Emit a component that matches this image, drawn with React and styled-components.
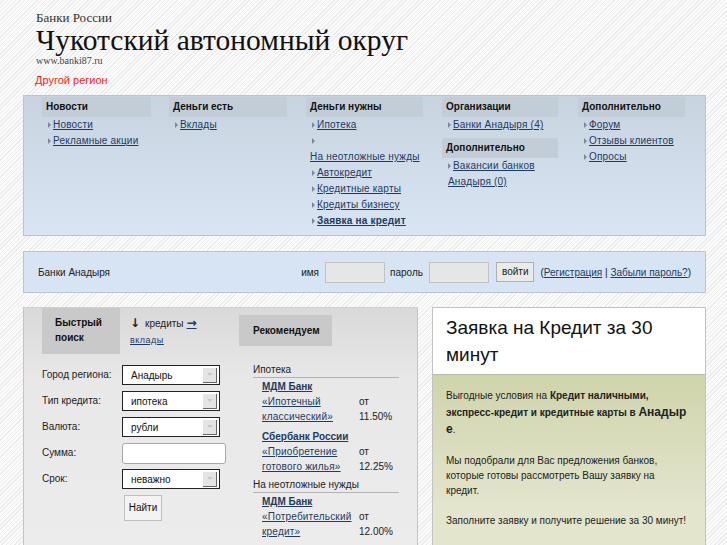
import React from "react";
import styled, { createGlobalStyle } from "styled-components";

const GlobalStyle = createGlobalStyle`
  html, body {
    margin: 0;
    padding: 0;
  }
  body {
    font-family: "Liberation Sans", Arial, sans-serif;
    background: repeating-linear-gradient(
      135deg,
      #fbfbfb 0px,
      #fbfbfb 2px,
      #ebebeb 2px,
      #ebebeb 3px
    );
    min-height: 545px;
    overflow: hidden;
  }
`;

const Page = styled.div`
  width: 683px;
  padding-left: 23px;
`;

const Header = styled.div`
  padding: 10px 0 0 13px;
  height: 95px;
  box-sizing: border-box;
`;

const SiteGroup = styled.div`
  font-family: "Liberation Serif", "Times New Roman", serif;
  font-size: 13px;
  line-height: 15px;
  color: #333;
`;

const SiteTitle = styled.h1`
  margin: 0;
  font-family: "Liberation Serif", "Times New Roman", serif;
  font-weight: normal;
  font-size: 29.5px;
  line-height: 30px;
  color: #111;
`;

const SiteUrl = styled.div`
  font-family: "Liberation Serif", "Times New Roman", serif;
  font-size: 10px;
  line-height: 12px;
  color: #444;
`;

const RegionLink = styled.a`
  display: block;
  margin-top: 7px;
  font-size: 11px;
  color: #ff1a1a;
  text-decoration: none;
  margin-left: -1px;
`;

const Nav = styled.div`
  display: grid;
  grid-template-columns: 127px 137px 136px 136px 1fr;
  padding: 1px 0 6px 18px;
  border: 1px solid #b8c4d0;
  background: linear-gradient(#c8d3e0, #d9e5f2);
`;

const NavColumn = styled.div`
  display: flex;
  flex-direction: column;
`;

const NavHead = styled.div`
  width: ${(p) => p.$w}px;
  height: 20px;
  box-sizing: border-box;
  padding-left: 4px;
  background: #c3cdd8;
  font-size: 10px;
  font-weight: bold;
  line-height: 20px;
  color: #111;
  margin-top: ${(p) => (p.$gap ? "5px" : "0")};
`;

const NavItem = styled.div`
  font-size: 10px;
  line-height: 16px;
  padding-left: 6px;
  color: #1d3b63;
`;

const Bullet = styled.span`
  display: inline-block;
  width: 0;
  height: 0;
  border-top: 3px solid transparent;
  border-bottom: 3px solid transparent;
  border-left: 3px solid #7d8896;
  margin-right: 2px;
  vertical-align: 0px;
`;

const NavLink = styled.a`
  color: #1d3b63;
  text-decoration: underline;
  font-weight: ${(p) => (p.$bold ? "bold" : "normal")};
  letter-spacing: 0.2px;
  display: ${(p) => (p.$break ? "block" : "inline")};
  margin-left: ${(p) => (p.$break ? "-2px" : "0")};
`;

const LoginBar = styled.div`
  margin-top: 15px;
  height: 42px;
  box-sizing: border-box;
  border: 1px solid #b7c6d6;
  background: #d6e4f3;
  display: flex;
  align-items: center;
  padding: 0 14px;
  font-size: 10px;
  color: #222;
`;

const LoginTitle = styled.div`
  flex: 1;
`;

const LoginLabel = styled.span`
  margin-right: 6px;
`;

const LoginInput = styled.div`
  width: 58px;
  height: 19px;
  border: 1px solid #c2c2c2;
  background: #e6e6e6;
  margin-right: 5px;
`;

const LoginButton = styled.div`
  height: 20px;
  box-sizing: border-box;
  padding: 0 5px;
  border: 1px solid #b0b0b0;
  background: #eaeaea;
  line-height: 18px;
  margin-left: 2px;
  margin-right: 6px;
`;

const BlueLink = styled.a`
  color: #1d3b63;
  text-decoration: underline;
`;

const Bottom = styled.div`
  margin-top: 14px;
  display: flex;
  gap: 14px;
  height: 240px;
`;

const SearchPanel = styled.div`
  width: 395px;
  box-sizing: border-box;
  border-left: 1px solid #c4c4c4;
  border-top: 1px solid #d0d0d0;
  border-right: 1px solid #c4c4c4;
  background: linear-gradient(#d9d9d9, #e8e8e8 30%, #ececec);
  display: flex;
  padding-left: 18px;
`;

const SearchColumn = styled.div`
  width: 197px;
`;

const Tabs = styled.div`
  display: flex;
  height: 46px;
`;

const ActiveTab = styled.div`
  width: 78px;
  box-sizing: border-box;
  padding: 7px 0 0 13px;
  background: #c9c9c9;
  font-size: 10px;
  font-weight: bold;
  line-height: 15px;
  color: #111;
`;

const TabSwitch = styled.div`
  margin-left: 10px;
  padding-top: 7px;
  font-size: 10px;
  line-height: 16px;
  color: #222;
`;

const Arrow = styled.span`
  font-family: "DejaVu Sans", sans-serif;
  font-weight: bold;
  font-size: 12px;
  margin-right: 5px;
`;

const TabArrowLink = styled.a`
  font-family: "DejaVu Sans", sans-serif;
  color: #1d3b63;
  text-decoration: underline;
  font-weight: bold;
  font-size: 12px;
  margin-left: 3px;
`;

const SmallLink = styled.a`
  display: block;
  color: #1d3b63;
  text-decoration: underline;
  font-size: 9px;
  letter-spacing: 0.5px;
`;

const Form = styled.div`
  margin-top: 11px;
  display: grid;
  grid-template-columns: 80px 1fr;
  grid-auto-rows: 26px;
  align-items: start;
  font-size: 10px;
  color: #222;
`;

const FieldLabel = styled.div`
  line-height: 19px;
`;

const Select = styled.div`
  width: 98px;
  height: 20px;
  box-sizing: border-box;
  border: 1px solid #222;
  background: #fff;
  display: flex;
  align-items: center;
  justify-content: space-between;
  padding: 0 2px 0 8px;
  font-size: 10px;
  color: #111;
`;

const SelectArrow = styled.span`
  width: 14px;
  height: 15px;
  box-sizing: border-box;
  background: #e4e4e4;
  border-right: 1px solid #666;
  border-bottom: 1px solid #666;
  display: flex;
  align-items: center;
  justify-content: center;
  &::after {
    content: "";
    border-left: 3px solid transparent;
    border-right: 3px solid transparent;
    border-top: 3px solid #c8c8c8;
  }
`;

const TextInput = styled.div`
  width: 104px;
  height: 21px;
  box-sizing: border-box;
  border: 1px solid #a8a8a8;
  border-radius: 3px;
  background: #fff;
`;

const FindButton = styled.div`
  grid-column: 2;
  width: 38px;
  height: 26px;
  box-sizing: border-box;
  margin-left: 2px;
  border: 1px solid #c0c0c0;
  background: #f3f3f3;
  font-size: 10px;
  text-align: center;
  line-height: 24px;
  color: #111;
`;

const RecColumn = styled.div`
  width: 160px;
  padding-top: 7px;
`;

const RecTab = styled.div`
  width: 93px;
  height: 31px;
  box-sizing: border-box;
  padding-left: 14px;
  background: #c9c9c9;
  font-size: 10px;
  font-weight: bold;
  line-height: 31px;
  color: #111;
`;

const RecList = styled.div`
  margin-top: 17px;
  padding-left: 14px;
  width: 146px;
`;

const RecCategory = styled.div`
  font-size: 10px;
  line-height: 14px;
  color: #222;
  border-bottom: 1px solid #b3b3b3;
`;

const RecOffer = styled.div`
  display: grid;
  grid-template-columns: 97px 1fr;
  padding-left: 9px;
  padding-top: 2px;
  margin-bottom: 4px;
  font-size: 10px;
  line-height: 15px;
  color: #222;
`;

const BankName = styled.a`
  grid-column: 1 / 3;
  font-weight: bold;
  color: #1d3b63;
  text-decoration: underline;
  line-height: 14px;
`;

const OfferName = styled.a`
  color: #1d3b63;
  text-decoration: underline;
  letter-spacing: 0.2px;
`;

const RequestPanel = styled.div`
  width: 274px;
  box-sizing: border-box;
  border: 1px solid #c2c2c2;
  border-bottom: none;
  background: linear-gradient(#ffffff 0, #ffffff 67px, #cfd4ab 67px, #e3e5cd 200px);
`;

const RequestTitle = styled.h2`
  margin: 0;
  height: 67px;
  box-sizing: border-box;
  padding: 6px 10px 0 13px;
  border-bottom: 1px solid #b9bca4;
  font-size: 19px;
  font-weight: normal;
  line-height: 27px;
  color: #111;
`;

const RequestBody = styled.div`
  padding: 12px 16px 0 13px;
  font-size: 10px;
  line-height: 15px;
  color: #222;
`;

const Paragraph = styled.p`
  margin: 0 0 15px;
  line-height: ${(p) => (p.$tall ? "17px" : "15px")};
`;

const BigBold = styled.b`
  font-size: 12px;
  word-break: break-all;
`;

const navColumns = [
  {
    heads: [
      {
        title: "Новости",
        w: 109,
        items: [{ text: "Новости" }, { text: "Рекламные акции" }],
      },
    ],
  },
  {
    heads: [{ title: "Деньги есть", w: 118, items: [{ text: "Вклады" }] }],
  },
  {
    heads: [
      {
        title: "Деньги нужны",
        w: 117,
        items: [
          { text: "Ипотека" },
          { text: "На неотложные нужды", brk: true },
          { text: "Автокредит" },
          { text: "Кредитные карты" },
          { text: "Кредиты бизнесу" },
          { text: "Заявка на кредит", bold: true },
        ],
      },
    ],
  },
  {
    heads: [
      { title: "Организации", w: 116, items: [{ text: "Банки Анадыря (4)" }] },
      {
        title: "Дополнительно",
        w: 116,
        items: [{ text: "Вакансии банков Анадыря (0)" }],
      },
    ],
  },
  {
    heads: [
      {
        title: "Дополнительно",
        w: 107,
        items: [{ text: "Форум" }, { text: "Отзывы клиентов" }, { text: "Опросы" }],
      },
    ],
  },
];

const fields = [
  { label: "Город региона:", value: "Анадырь" },
  { label: "Тип кредита:", value: "ипотека" },
  { label: "Валюта:", value: "рубли" },
  { label: "Сумма:", input: true },
  { label: "Срок:", value: "неважно" },
];

const offers = [
  {
    category: "Ипотека",
    items: [
      { bank: "МДМ Банк", lines: ["«Ипотечный", "классический»"], rate: "11.50%" },
      { bank: "Сбербанк России", lines: ["«Приобретение", "готового жилья»"], rate: "12.25%" },
    ],
  },
  {
    category: "На неотложные нужды",
    items: [
      { bank: "МДМ Банк", lines: ["«Потребительский", "кредит»"], rate: "12.00%" },
    ],
  },
];

const App = () => {
  return (
    <Page>
      <GlobalStyle />
      <Header>
        <SiteGroup>Банки России</SiteGroup>
        <SiteTitle>Чукотский автономный округ</SiteTitle>
        <SiteUrl>www.banki87.ru</SiteUrl>
        <RegionLink href="#">Другой регион</RegionLink>
      </Header>

      <Nav>
        {navColumns.map((col, i) => (
          <NavColumn key={i}>
            {col.heads.map((h, j) => (
              <React.Fragment key={j}>
                <NavHead $w={h.w} $gap={j > 0}>
                  {h.title}
                </NavHead>
                {h.items.map((it) => (
                  <NavItem key={it.text}>
                    <Bullet />
                    <NavLink href="#" $bold={it.bold} $break={it.brk}>
                      {it.text}
                    </NavLink>
                  </NavItem>
                ))}
              </React.Fragment>
            ))}
          </NavColumn>
        ))}
      </Nav>

      <LoginBar>
        <LoginTitle>Банки Анадыря</LoginTitle>
        <LoginLabel>имя</LoginLabel>
        <LoginInput />
        <LoginLabel>пароль</LoginLabel>
        <LoginInput />
        <LoginButton>войти</LoginButton>
        <span>
          (<BlueLink href="#">Регистрация</BlueLink> |{" "}
          <BlueLink href="#">Забыли пароль?</BlueLink>)
        </span>
      </LoginBar>

      <Bottom>
        <SearchPanel>
          <SearchColumn>
            <Tabs>
              <ActiveTab>
                Быстрый
                <br />
                поиск
              </ActiveTab>
              <TabSwitch>
                <Arrow>↓</Arrow>кредиты<TabArrowLink href="#">→</TabArrowLink>
                <SmallLink href="#">вклады</SmallLink>
              </TabSwitch>
            </Tabs>
            <Form>
              {fields.map((f) => (
                <React.Fragment key={f.label}>
                  <FieldLabel>{f.label}</FieldLabel>
                  {f.input ? (
                    <TextInput />
                  ) : (
                    <Select>
                      {f.value}
                      <SelectArrow />
                    </Select>
                  )}
                </React.Fragment>
              ))}
              <FindButton>Найти</FindButton>
            </Form>
          </SearchColumn>

          <RecColumn>
            <RecTab>Рекомендуем</RecTab>
            <RecList>
              {offers.map((group) => (
                <React.Fragment key={group.category}>
                  <RecCategory>{group.category}</RecCategory>
                  {group.items.map((o) => (
                    <RecOffer key={o.bank + o.rate}>
                      <BankName href="#">{o.bank}</BankName>
                      <OfferName href="#">{o.lines[0]}</OfferName>
                      <span>от</span>
                      <OfferName href="#">{o.lines[1]}</OfferName>
                      <span>{o.rate}</span>
                    </RecOffer>
                  ))}
                </React.Fragment>
              ))}
            </RecList>
          </RecColumn>
        </SearchPanel>

        <RequestPanel>
          <RequestTitle>Заявка на Кредит за 30 минут</RequestTitle>
          <RequestBody>
            <Paragraph $tall>
              Выгодные условия на{" "}
              <b>Кредит наличными, экспресс-кредит и кредитные карты в </b>
              <BigBold>Анадыре</BigBold>.
            </Paragraph>
            <Paragraph>
              Мы подобрали для Вас предложения банков, которые готовы
              рассмотреть Вашу заявку на кредит.
            </Paragraph>
            <Paragraph>Заполните заявку и получите решение за 30 минут!</Paragraph>
          </RequestBody>
        </RequestPanel>
      </Bottom>
    </Page>
  );
};

export default App;
